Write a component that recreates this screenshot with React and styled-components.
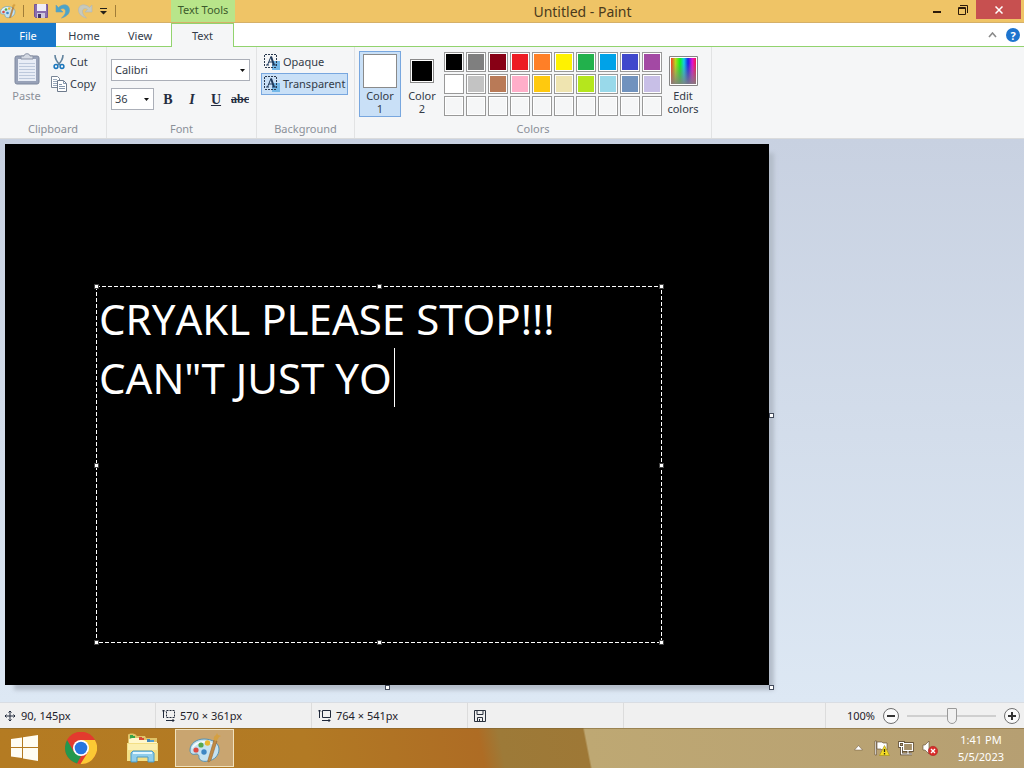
import { useState } from "react";
import styled, { createGlobalStyle } from "styled-components";

const palette = [
  ["Black", "#000000"], ["Gray 50%", "#7f7f7f"], ["Dark red", "#880015"], ["Red", "#ed1c24"], ["Orange", "#ff7f27"],
  ["Yellow", "#fff200"], ["Green", "#22b14c"], ["Turquoise", "#00a2e8"], ["Indigo", "#3f48cc"], ["Purple", "#a349a4"],
  ["White", "#ffffff"], ["Gray 25%", "#c3c3c3"], ["Brown", "#b97a57"], ["Rose", "#ffaec9"], ["Gold", "#ffc90e"],
  ["Light yellow", "#efe4b0"], ["Lime", "#b5e61d"], ["Light turquoise", "#99d9ea"], ["Blue-gray", "#7092be"], ["Lavender", "#c8bfe7"],
];
const customSlots = Array.from({ length: 10 }, (_, i) => i + 1);

const PaintIcon = ({ size }) => (
  <svg width={size} height={size} viewBox="0 0 32 32" aria-hidden="true">
    <path d="M15 7C7 7 1 12 1 18c0 4 3 5 6 4 3 0 3 2 3 4 1 3 5 4 9 3 7-1 11-6 11-12C30 11 23 7 15 7z" fill="#c5e2f1" stroke="#5592b2" />
    <path d="M15 9C8 9 3 13 3 17c4-5 9-7 15-6 4 0 7 2 9 5-1-4-6-7-12-7z" fill="#f5fbff" />
    <circle cx="7" cy="18" r="2.6" fill="#dc4b43" />
    <circle cx="12" cy="13" r="2.6" fill="#55a84f" />
    <circle cx="18.500" cy="11" r="2.700" fill="#e8b832" />
    <circle cx="15" cy="20" r="2.700" fill="#3e87c4" />
    <path d="M25 8l3 1-6 19c-1 2-4 3-3 0z" fill="#c08a45" stroke="#98672f" strokeWidth=".6" />
    <path d="M25 8c-1-2 0-4 2-5l1-2 1 2 3 1-2 1c-1 2-2 4-4 4z" fill="#d5a041" />
  </svg>
);
const SaveIcon = () => (
  <svg width="16" height="16" viewBox="0 0 16 16" aria-hidden="true">
    <path d="M1.500 1.500h13v13h-12l-1-1z" fill="#8a6cae" stroke="#755795" />
    <path d="M4 1h9v7H4z" fill="#f0edf7" />
    <path d="M4 10h8v5H4z" fill="#cdc7dc" />
    <path d="M5 11h3v4H5z" fill="#443469" />
  </svg>
);
const UndoIcon = () => (
  <svg width="16" height="16" viewBox="0 0 16 16" aria-hidden="true">
    <path d="M1 2v7h7L5.500 6.500C8 4.500 11 6 10.500 9c-.2 2-1.500 4-4 6 5-1.500 8-4 8-8C14.500 1.500 8 0 3.500 4.500z" fill="#4ba4c9" stroke="#6c9eb5" strokeWidth=".6" />
  </svg>
);
const RedoIcon = () => (
  <svg width="16" height="16" viewBox="0 0 16 16" aria-hidden="true">
    <path d="M15 2v7H8l2.500-2.500C8 4.500 5 6 5.500 9c.2 2 1.500 4 4 6-5-1.500-8-4-8-8C1.500 1.500 8 0 12.500 4.500z" fill="#c6c9bd" stroke="#aeb6b5" strokeWidth=".6" />
  </svg>
);
const MoreIcon = () => (
  <svg width="7" height="8" viewBox="0 0 7 8" aria-hidden="true">
    <path d="M0 1h7v1H0zM0 4h7L3.500 7.500z" fill="#25211a" />
  </svg>
);
const ArrowIcon = () => (
  <svg width="5" height="3" viewBox="0 0 5 3" aria-hidden="true"><path d="M0 0h5L2.500 3z" fill="#111" /></svg>
);
const MinimizeIcon = () => (
  <svg width="10" height="10" viewBox="0 0 10 10" aria-hidden="true"><path d="M1 6h8v2H1z" fill="#2c1b0a" /></svg>
);
const RestoreIcon = () => (
  <svg width="10" height="10" viewBox="0 0 10 10" aria-hidden="true">
    <path d="M.5 2.500h7v7h-7zM.5 3.500h7M2 .5h7.500V8" fill="none" stroke="#2c1b0a" />
  </svg>
);
const CloseIcon = () => (
  <svg width="8" height="8" viewBox="0 0 8 8" aria-hidden="true"><path d="M.5.5l7 7m0-7l-7 7" stroke="#fff" strokeWidth="1.500" /></svg>
);
const PasteIcon = () => (
  <svg width="26" height="32" viewBox="0 0 26 32" aria-hidden="true">
    <rect x="1" y="3" width="24" height="28" rx="2" fill="#98a2b8" stroke="#7e899f" />
    <path d="M4 6h18v22H4z" fill="#e8edf6" />
    <path d="M5 10.500h16M5 13.500h16M5 16.500h16M5 19.500h16M5 22.500h16M5 25.500h16" stroke="#bdc9dc" />
    <path d="M7 6V3h3c0-3 6-3 6 0h3v3z" fill="#d5dae3" stroke="#8a93a5" />
  </svg>
);
const CutIcon = () => (
  <svg width="12" height="16" viewBox="0 0 12 16" aria-hidden="true">
    <path d="M2 1c0 4 2 7 5 10M10 1c0 4-2 7-5 10" fill="none" stroke="#62849f" strokeWidth="1.600" />
    <circle cx="3" cy="12.500" r="1.900" fill="none" stroke="#1976bd" strokeWidth="1.500" />
    <circle cx="9" cy="12.500" r="1.900" fill="none" stroke="#1976bd" strokeWidth="1.500" />
  </svg>
);
const CopyIcon = () => (
  <svg width="16" height="16" viewBox="0 0 16 16" aria-hidden="true">
    <path d="M.5.5h6l2 2v9h-8z" fill="#fff" stroke="#788596" />
    <path d="M2 3.500h4M2 5.500h4M2 7.500h4M2 9.500h4" stroke="#9aaabd" />
    <path d="M6.500 4.500h6l3 3v8h-9z" fill="#fff" stroke="#6d7a8c" />
    <path d="M12.500 4.500v3h3M8 8.500h3M8 10.500h6M8 12.500h6" fill="none" stroke="#8497ae" />
  </svg>
);
const TextBackIcon = () => (
  <svg width="16" height="16" viewBox="0 0 16 16" aria-hidden="true">
    <path d="M8 7h8v9H8z" fill="#74b8e8" />
    <path d="M1 .5h12M.5 1v12M12.500 1v12M1 13.500h12" stroke="#29384d" strokeDasharray="2 1" />
    <path d="M3.500 11L7 2.500" fill="none" stroke="#203a5c" />
    <path d="M7 2.500L10 11" fill="none" stroke="#203a5c" strokeWidth="2" />
    <path d="M2 11h3M8 11h4M5 8h4" stroke="#203a5c" />
  </svg>
);
const SpectrumIcon = () => (
  <svg width="29" height="30" viewBox="0 0 29 30" aria-hidden="true">
    <defs>
      <linearGradient id="hue">
        <stop offset="0" stopColor="#f13b28" /><stop offset=".18" stopColor="#b3d91f" /><stop offset=".36" stopColor="#13f01b" />
        <stop offset=".52" stopColor="#13cde5" /><stop offset=".68" stopColor="#1922e8" /><stop offset=".85" stopColor="#df12d5" />
        <stop offset="1" stopColor="#f01945" />
      </linearGradient>
      <linearGradient id="grey" x2="0" y2="1"><stop offset=".2" stopColor="#808080" stopOpacity="0" /><stop offset="1" stopColor="#808080" stopOpacity=".9" /></linearGradient>
    </defs>
    <path d="M.5.5h28v29H.5z" fill="#fff" stroke="#858585" />
    <path d="M2 2h25v26H2z" fill="url(#hue)" />
    <path d="M2 2h25v26H2z" fill="url(#grey)" />
  </svg>
);
const CursorIcon = () => (
  <svg width="12" height="12" viewBox="0 0 12 12" aria-hidden="true">
    <path d="M6 1v10M1 6h10M4.500 2.500L6 1l1.500 1.500M4.500 9.500L6 11l1.500-1.500M2.500 4.500L1 6l1.500 1.500M9.500 4.500L11 6 9.500 7.500" fill="none" stroke="#20293a" />
  </svg>
);
const SizeIcon = ({ dashed }) => (
  <svg width="13" height="13" viewBox="0 0 13 13" aria-hidden="true">
    <path d="M4.500 1.500h8v7h-8z" fill="none" stroke="#20293a" strokeDasharray={dashed ? "2 1" : undefined} />
    <path d="M1.500 1v8M0 2.500L1.500 1 3 2.500M4 11.500h8M10.500 10l1.500 1.500-1.500 1.500" fill="none" stroke="#20293a" />
  </svg>
);
const DiskIcon = () => (
  <svg width="12" height="12" viewBox="0 0 12 12" aria-hidden="true">
    <path d="M.5.5h11v11h-11zM3 .5v4h6v-4M3.500 11.500v-4h5v4M5.500 9v2" fill="none" stroke="#29303c" />
  </svg>
);
const StartIcon = () => (
  <svg width="27" height="26" viewBox="0 0 27 26" aria-hidden="true">
    <path d="M0 4l11-1.500V12H0zM12 2.300L27 0v12H12zM0 13h11v10L0 21.500zM12 13h15v13l-15-2.500z" fill="#fffdf3" />
  </svg>
);
const ChromeIcon = () => (
  <svg width="32" height="32" viewBox="0 0 32 32" aria-hidden="true">
    <circle cx="16" cy="16" r="16" fill="#e33b2e" />
    <path d="M2.100 8L9 20l7 4-4 7.500A16 16 0 0 1 2.100 8z" fill="#24984d" />
    <path d="M16 8h13.900A16 16 0 0 1 15.500 32L23 20z" fill="#fcc934" />
    <path d="M2.100 8A16 16 0 0 1 29.900 8H16z" fill="#e33b2e" />
    <circle cx="16" cy="16" r="8" fill="#fff" />
    <circle cx="16" cy="16" r="6.300" fill="#2776df" />
  </svg>
);
const FolderIcon = () => (
  <svg width="33" height="30" viewBox="0 0 33 30" aria-hidden="true">
    <path d="M2 2c0-2 7-2 8 0l1 1h8l1 2h11v23H2z" fill="#dfc469" />
    <path d="M4 3h5v3H4z" fill="#37a447" /><path d="M12 5h6v2h-6z" fill="#d74b37" /><path d="M20 7h8v2h-8z" fill="#55a0cf" />
    <path d="M6 5h7l1 2h7l1 2h9v4H3V6z" fill="#fff7cb" />
    <path d="M4 2h3v3H4z" fill="#37a447" /><path d="M13 4h3v3h-3z" fill="#d74b37" /><path d="M21 6h3v3h-3z" fill="#4689b9" />
    <path d="M1 10h31v18H1z" fill="#f3df86" />
    <path d="M2 11h29v6H2z" fill="#fbefaf" />
    <path d="M5 29v-9l2-2h19l2 2v9h-6v-5H11v5z" fill="#8fcdec" stroke="#4b9ac3" />
    <path d="M7 20h19" stroke="#e1f7ff" strokeWidth="2" />
  </svg>
);
const TrayArrow = () => (
  <svg width="9" height="6" viewBox="0 0 9 6" aria-hidden="true"><path d="M4.500 .5L8.500 5h-8z" fill="#fff" stroke="#66513a" strokeWidth=".5" /></svg>
);
const FlagIcon = () => (
  <svg width="16" height="16" viewBox="0 0 16 16" aria-hidden="true">
    <path d="M1 1h1.500v14H1zM3 2h5l1 1h4v7H8L7 9H3z" fill="#fff" stroke="#59452c" strokeWidth=".6" />
    <path d="M10.500 5.500l5 10h-10z" fill="#f4dc25" stroke="#a18d16" strokeWidth=".6" />
    <path d="M10.500 9v3m0 1v1.500" stroke="#332f13" strokeWidth="1.300" />
  </svg>
);
const NetworkIcon = () => (
  <svg width="16" height="16" viewBox="0 0 16 16" aria-hidden="true">
    <path d="M5.500 3.500h9v7h-9zM10 10.500v3M6 14h8M1.500 2.500h4v4h-4zM3.500 6.500V14H6" fill="none" stroke="#4e3d28" strokeWidth="2.600" />
    <path d="M5.500 3.500h9v7h-9z" fill="#a58f68" />
    <path d="M5.500 3.500h9v7h-9zM10 10.500v3M6 14h8M1.500 2.500h4v4h-4zM3.500 6.500V14H6" fill="none" stroke="#fff" strokeWidth="1.200" />
  </svg>
);
const SpeakerIcon = () => (
  <svg width="16" height="16" viewBox="0 0 16 16" aria-hidden="true">
    <path d="M1 5h2l4-4v13l-4-4H1z" fill="#fff" stroke="#5d4830" strokeWidth=".6" />
    <circle cx="11" cy="11" r="4.700" fill="#d92c2a" stroke="#a72020" strokeWidth=".5" />
    <path d="M9 9l4 4m0-4l-4 4" stroke="#fff" strokeWidth="1.400" />
  </svg>
);

const App = () => {
  const [text, setText] = useState('CRYAKL PLEASE STOP!!!\nCAN"T JUST YO');
  const [font, setFont] = useState("Calibri");
  const [size, setSize] = useState("36");
  const [zoom, setZoom] = useState(50);
  const [transparent, setTransparent] = useState(true);

  return (
    <Window>
      <GlobalStyle />
      <TitleBar>
        <QuickAccess>
          <PaintIcon size={16} />
          <Divider />
          <QuickButton aria-label="Save"><SaveIcon /></QuickButton>
          <QuickButton aria-label="Undo"><UndoIcon /></QuickButton>
          <QuickButton aria-label="Redo"><RedoIcon /></QuickButton>
          <QuickButton $small aria-label="Customize Quick Access Toolbar"><MoreIcon /></QuickButton>
          <Divider />
        </QuickAccess>
        <ContextTitle>Text Tools</ContextTitle>
        <Title>Untitled - Paint</Title>
        <WindowButton aria-label="Minimize"><MinimizeIcon /></WindowButton>
        <WindowButton aria-label="Restore"><RestoreIcon /></WindowButton>
        <CloseButton aria-label="Close"><CloseIcon /></CloseButton>
      </TitleBar>

      <Tabs>
        <FileTab>File</FileTab>
        <Tab>Home</Tab>
        <Tab>View</Tab>
        <Tab $active>Text</Tab>
        <TabTools>
          <QuickButton aria-label="Minimize the Ribbon">
            <svg width="9" height="6" viewBox="0 0 9 6" aria-hidden="true"><path d="M1 5l3.500-4L8 5" fill="none" stroke="#8a8a8a" strokeWidth="1.600" /></svg>
          </QuickButton>
          <HelpButton aria-label="Help">?</HelpButton>
        </TabTools>
      </Tabs>

      <Ribbon>
        <Group>
          <ClipboardBody>
            <PasteButton disabled><PasteIcon />Paste</PasteButton>
            <Stack>
              <RowButton><IconSlot><CutIcon /></IconSlot>Cut</RowButton>
              <RowButton><IconSlot><CopyIcon /></IconSlot>Copy</RowButton>
            </Stack>
          </ClipboardBody>
          <GroupLabel>Clipboard</GroupLabel>
        </Group>
        <Group>
          <FontBody>
            <Combo>
              <Select aria-label="Font family" value={font} onChange={(e) => setFont(e.target.value)}>
                <option>Calibri</option>
                <option>Arial</option>
              </Select>
              <ArrowIcon />
            </Combo>
            <FontRow>
              <Combo $narrow>
                <Select aria-label="Font size" value={size} onChange={(e) => setSize(e.target.value)}>
                  <option>36</option>
                  <option>48</option>
                </Select>
                <ArrowIcon />
              </Combo>
              <StyleButton aria-label="Bold"><b>B</b></StyleButton>
              <StyleButton aria-label="Italic"><i>I</i></StyleButton>
              <StyleButton aria-label="Underline"><u>U</u></StyleButton>
              <StyleButton $small aria-label="Strikethrough"><s>abc</s></StyleButton>
            </FontRow>
          </FontBody>
          <GroupLabel>Font</GroupLabel>
        </Group>
        <Group>
          <BackgroundBody>
            <ModeButton $active={!transparent} onClick={() => setTransparent(false)}><TextBackIcon />Opaque</ModeButton>
            <ModeButton $active={transparent} onClick={() => setTransparent(true)}><TextBackIcon />Transparent</ModeButton>
          </BackgroundBody>
          <GroupLabel>Background</GroupLabel>
        </Group>
        <Group>
          <ColorsBody>
            <ColorButton $active><Well><Ink $large $color="#ffffff" /></Well>Color<br />1</ColorButton>
            <ColorButton><Well><Ink $color="#000000" /></Well>Color<br />2</ColorButton>
            <Palette>
              {palette.map(([name, color]) => <Swatch key={name} $color={color} aria-label={name} />)}
              {customSlots.map((n) => <Swatch key={n} aria-label={`Custom color ${n}`} />)}
            </Palette>
            <ColorButton><Well><SpectrumIcon /></Well>Edit<br />colors</ColorButton>
          </ColorsBody>
          <GroupLabel>Colors</GroupLabel>
        </Group>
      </Ribbon>

      <Workspace>
        <Canvas>
          <TextFrame>
            <FrameLines aria-hidden="true">
              <rect x="0" y="0" width="100%" height="100%" />
            </FrameLines>
            <TextArea aria-label="Canvas text" spellCheck={false} value={text} onChange={(e) => setText(e.target.value)} />
            <Caret />
            {["0%", "50%", "100%"].map((y) =>
              ["0%", "50%", "100%"].map((x) => (x === "50%" && y === "50%" ? null : <Handle key={x + y} $x={x} $y={y} />))
            )}
          </TextFrame>
          <Grip $x="100%" $y="50%" />
          <Grip $x="50%" $y="100%" />
          <Grip $x="100%" $y="100%" />
        </Canvas>
      </Workspace>

      <StatusBar>
        <StatusCell><CursorIcon />90, 145px</StatusCell>
        <StatusCell><SizeIcon dashed />570 × 361px</StatusCell>
        <StatusCell><SizeIcon />764 × 541px</StatusCell>
        <StatusCell><DiskIcon /></StatusCell>
        <StatusSpacer />
        <ZoomArea>
          <ZoomLabel htmlFor="zoom">100%</ZoomLabel>
          <ZoomButton aria-label="Zoom out" onClick={() => setZoom(Math.max(0, zoom - 10))}>
            <svg width="8" height="8" viewBox="0 0 8 8" aria-hidden="true"><path d="M0 4h8" stroke="#333" strokeWidth="2" /></svg>
          </ZoomButton>
          <ZoomSlider id="zoom" type="range" value={zoom} onChange={(e) => setZoom(Number(e.target.value))} />
          <ZoomButton aria-label="Zoom in" onClick={() => setZoom(Math.min(100, zoom + 10))}>
            <svg width="8" height="8" viewBox="0 0 8 8" aria-hidden="true"><path d="M0 4h8M4 0v8" stroke="#333" strokeWidth="2" /></svg>
          </ZoomButton>
        </ZoomArea>
      </StatusBar>

      <Taskbar>
        <TaskButton $start aria-label="Start"><StartIcon /></TaskButton>
        <TaskButton aria-label="Google Chrome"><ChromeIcon /></TaskButton>
        <TaskButton aria-label="File Explorer"><FolderIcon /></TaskButton>
        <TaskButton $active aria-label="Paint"><PaintIcon size={32} /></TaskButton>
        <Tray>
          <TrayButton aria-label="Show hidden icons"><TrayArrow /></TrayButton>
          <TrayButton aria-label="Action Center"><FlagIcon /></TrayButton>
          <TrayButton aria-label="Network"><NetworkIcon /></TrayButton>
          <TrayButton aria-label="Volume"><SpeakerIcon /></TrayButton>
          <Clock>1:41 PM<br />5/5/2023</Clock>
        </Tray>
      </Taskbar>
    </Window>
  );
};

const GlobalStyle = createGlobalStyle`
  * {
    box-sizing: border-box;
  }
  body {
    margin: 0;
  }
  body, button, select, input {
    font-family: "Noto Sans", sans-serif;
    font-size: 11px;
    line-height: 13px;
    color: #333b48;
  }
  button {
    padding: 0;
    border: none;
    background: none;
  }
  svg {
    flex: none;
    display: block;
  }
`;
const Window = styled.div`
  display: flex;
  flex-direction: column;
  height: 100vh;
  overflow: hidden;
`;
const TitleBar = styled.header`
  display: flex;
  height: 23px;
  flex: none;
  background: #efc466;
  border-bottom: 1px solid #d5b069;
`;
const QuickAccess = styled.div`
  display: flex;
  align-items: center;
  gap: 6px;
  width: 171px;
`;
const Divider = styled.span`
  width: 1px;
  height: 12px;
  margin: 0 3px 0 1px;
  background: #a07d38;
`;
const QuickButton = styled.button`
  display: flex;
  align-items: center;
  justify-content: center;
  width: ${(p) => (p.$small ? 9 : 16)}px;
  height: 16px;
`;
const ContextTitle = styled.div`
  width: 64px;
  padding-top: 3px;
  text-align: center;
  background: #b8e58a;
  color: #3c5a2c;
`;
const Title = styled.h1`
  flex: 1;
  margin: 0;
  padding: 3px 0 0 6px;
  font-size: 14px;
  line-height: 17px;
  font-weight: 400;
  text-align: center;
  color: #4a3a1c;
`;
const WindowButton = styled.button`
  display: flex;
  align-items: center;
  justify-content: center;
  width: 26px;
  height: 19px;
`;
const CloseButton = styled(WindowButton)`
  width: 45px;
  margin-right: 3px;
  background: #c75050;
`;
const Tabs = styled.nav`
  display: flex;
  flex: none;
  height: 24px;
  background: #fff;
  box-shadow: inset 0 -1px #92d36e;
`;
const Tab = styled.button`
  width: ${(p) => (p.$active ? 63 : 56)}px;
  margin-left: ${(p) => (p.$active ? 3 : 0)}px;
  background: ${(p) => (p.$active ? "#f5f6f7" : "transparent")};
  border: 1px solid ${(p) => (p.$active ? "#92d36e" : "transparent")};
  border-bottom: none;
`;
const FileTab = styled(Tab)`
  border: none;
  background: #1979ca;
  color: #fff;
`;
const TabTools = styled.div`
  display: flex;
  align-items: center;
  gap: 6px;
  margin-left: auto;
  padding-right: 4px;
`;
const HelpButton = styled.button`
  width: 14px;
  height: 14px;
  border-radius: 50%;
  background: #1d74ce;
  color: #fff;
  font-weight: 700;
`;
const Ribbon = styled.section`
  display: flex;
  flex: none;
  height: 92px;
  background: #f5f6f7;
  border-bottom: 1px solid #dadbdc;
`;
const Group = styled.div`
  display: flex;
  flex-direction: column;
  padding: 4px 4px 3px;
  border-right: 1px solid #e2e3e4;
`;
const GroupLabel = styled.div`
  margin-top: auto;
  text-align: center;
  color: #8b9099;
`;
const ClipboardBody = styled.div`
  display: flex;
  gap: 2px;
  width: 98px;
`;
const PasteButton = styled.button`
  display: flex;
  flex-direction: column;
  align-items: center;
  gap: 4px;
  width: 45px;
  padding-top: 2px;
  color: #8b9099;
`;
const Stack = styled.div`
  display: flex;
  flex-direction: column;
`;
const RowButton = styled.button`
  display: flex;
  align-items: center;
  gap: 3px;
  height: 22px;
  padding-bottom: 1px;
`;
const IconSlot = styled.span`
  display: flex;
  justify-content: center;
  width: 16px;
`;
const FontBody = styled.div`
  display: flex;
  flex-direction: column;
  gap: 7px;
  width: 141px;
  padding-top: 8px;
`;
const FontRow = styled.div`
  display: flex;
`;
const Combo = styled.div`
  position: relative;
  width: ${(p) => (p.$narrow ? 43 : 139)}px;
  margin-right: ${(p) => (p.$narrow ? 2 : 0)}px;
  svg {
    position: absolute;
    right: 5px;
    top: 10px;
    pointer-events: none;
  }
`;
const Select = styled.select`
  display: block;
  appearance: none;
  width: 100%;
  height: 22px;
  padding: 0 3px 1px;
  border: 1px solid #abafb8;
  border-radius: 0;
  background: #fff;
`;
const StyleButton = styled.button`
  width: 24px;
  height: 22px;
  font-family: "Liberation Serif", serif;
  font-size: ${(p) => (p.$small ? 12 : 14)}px;
  font-weight: 700;
  color: #242c40;
`;
const BackgroundBody = styled.div`
  width: 89px;
`;
const ModeButton = styled.button`
  display: flex;
  align-items: center;
  gap: 3px;
  width: 87px;
  height: 22px;
  padding: 0 2px 1px;
  border: 1px solid ${(p) => (p.$active ? "#78a7df" : "transparent")};
  background: ${(p) => (p.$active ? "#c9e0f7" : "transparent")};
`;
const ColorsBody = styled.div`
  display: flex;
  width: 348px;
`;
const ColorButton = styled.button`
  width: 42px;
  height: 66px;
  border: 1px solid ${(p) => (p.$active ? "#78a7df" : "transparent")};
  background: ${(p) => (p.$active ? "#c9e0f7" : "transparent")};
`;
const Well = styled.span`
  display: flex;
  align-items: center;
  justify-content: center;
  height: 36px;
`;
const Ink = styled.span`
  width: ${(p) => (p.$large ? 34 : 24)}px;
  height: ${(p) => (p.$large ? 34 : 24)}px;
  border: 1px solid #8a8a8a;
  box-shadow: inset 0 0 0 1px #fff;
  background: ${(p) => p.$color};
`;
const Palette = styled.div`
  display: grid;
  grid-template-columns: repeat(10, 20px);
  grid-auto-rows: 20px;
  gap: 2px;
  padding: 1px 0 0 1px;
`;
const Swatch = styled.button`
  border: 1px solid #999;
  box-shadow: inset 0 0 0 1px #fff;
  background: ${(p) => p.$color || "#f5f6f7"};
`;
const Workspace = styled.main`
  flex: 1;
  min-height: 0;
  overflow: auto;
  padding: 5px;
  background: linear-gradient(#c8d1e1, #dde8f4);
`;
const Canvas = styled.div`
  position: relative;
  width: 764px;
  height: 541px;
  background: #000;
  box-shadow: 7px 7px 4px -2px #b4bdca;
`;
const TextFrame = styled.div`
  position: absolute;
  left: 91px;
  top: 142px;
  width: 566px;
  height: 357px;
`;
const FrameLines = styled.svg`
  position: absolute;
  width: 100%;
  height: 100%;
  rect {
    fill: none;
    stroke: #fff;
    stroke-width: 2;
    stroke-dasharray: 4 2;
  }
`;
const TextArea = styled.textarea`
  position: relative;
  display: block;
  width: 100%;
  height: 100%;
  padding: 3px;
  border: none;
  outline: none;
  resize: none;
  overflow: hidden;
  background: transparent;
  color: #fff;
  font-family: "Noto Sans", sans-serif;
  font-size: 42px;
  line-height: 59px;
  font-kerning: none;
`;
const Caret = styled.span`
  position: absolute;
  left: 298px;
  top: 62px;
  width: 1px;
  height: 59px;
  background: #fff;
`;
const Handle = styled.span`
  position: absolute;
  left: ${(p) => p.$x};
  top: ${(p) => p.$y};
  width: 5px;
  height: 5px;
  margin: -2px;
  border: 1px solid #444;
  background: #fff;
  translate: ${(p) => (p.$x === "100%" ? "-1px" : "0")} ${(p) => (p.$y === "100%" ? "-1px" : "0")};
`;
const Grip = styled.span`
  position: absolute;
  left: ${(p) => p.$x};
  top: ${(p) => p.$y};
  width: 5px;
  height: 5px;
  margin-left: ${(p) => (p.$x === "50%" ? -2 : 0)}px;
  margin-top: ${(p) => (p.$y === "50%" ? -2 : 0)}px;
  border: 1px solid #444c5c;
  background: #fff;
`;
const StatusBar = styled.footer`
  display: flex;
  flex: none;
  height: 26px;
  background: #f0f0f0;
  border-top: 1px solid #d9dde3;
  color: #1e222a;
`;
const StatusCell = styled.div`
  display: flex;
  align-items: center;
  gap: 5px;
  width: 156px;
  padding: 0 4px 0 6px;
  border-right: 1px solid #dcdcdc;
  &:first-child {
    padding-left: 4px;
  }
`;
const StatusSpacer = styled.div`
  flex: 1;
`;
const ZoomArea = styled.div`
  display: flex;
  align-items: center;
  gap: 8px;
  padding: 0 4px 0 21px;
  border-left: 1px solid #dcdcdc;
`;
const ZoomLabel = styled.label`
  color: #1e222a;
`;
const ZoomButton = styled.button`
  display: flex;
  align-items: center;
  justify-content: center;
  width: 16px;
  height: 16px;
  border: 1px solid #707070;
  border-radius: 50%;
  background: #fafafa;
`;
const ZoomSlider = styled.input`
  appearance: none;
  width: 89px;
  height: 16px;
  margin: 0;
  background: linear-gradient(#cfcfcf, #cfcfcf) center / 100% 2px no-repeat;
  &::-webkit-slider-thumb {
    appearance: none;
    width: 10px;
    height: 16px;
    border: 1px solid #9a9a9a;
    border-radius: 1px 1px 5px 5px;
    background: #f0f0f0;
  }
`;
const Taskbar = styled.footer`
  display: flex;
  flex: none;
  height: 40px;
  background: linear-gradient(79deg, #b47b22 0%, #b27a24 30%, #ae6c24 47%, #9d7a38 49%, #9e7836 57.2%, #bea873 57.4%, #b69f72 100%);
  box-shadow: inset 0 1px rgba(120, 95, 50, 0.5);
`;
const TaskButton = styled.button`
  display: flex;
  align-items: center;
  justify-content: center;
  width: ${(p) => (p.$start ? 48 : 59)}px;
  height: 38px;
  margin: 1px 1px 0 ${(p) => (p.$start ? 0 : 2)}px;
  border: ${(p) => (p.$active ? "1px solid #f1e2bd" : "none")};
  background: ${(p) => (p.$active ? "#c9a570" : "transparent")};
`;
const Tray = styled.div`
  display: flex;
  align-items: center;
  margin-left: auto;
  padding-right: 16px;
`;
const TrayButton = styled.button`
  display: flex;
  align-items: center;
  justify-content: center;
  width: 24px;
  height: 24px;
`;
const Clock = styled.time`
  width: 54px;
  margin-left: 12px;
  text-align: center;
  line-height: 17px;
  color: #fff;
`;

export default App;
